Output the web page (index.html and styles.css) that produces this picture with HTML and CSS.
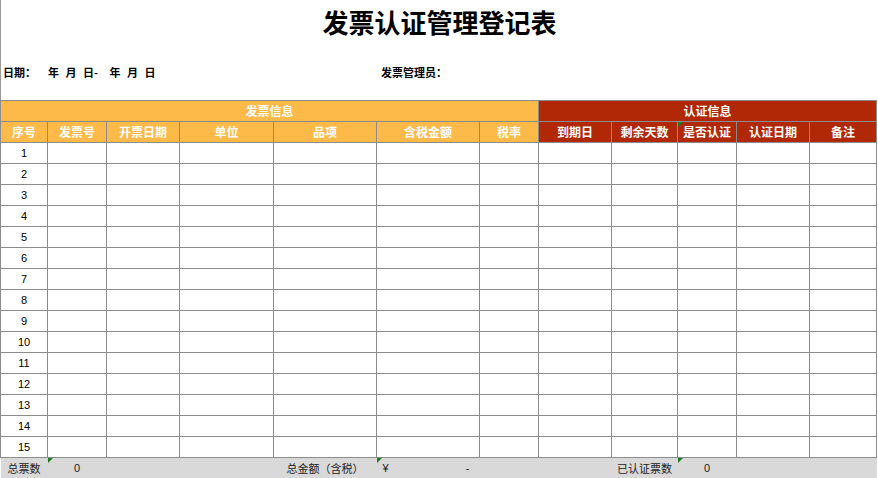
FILE: index.html
```html
<!DOCTYPE html>
<html lang="zh-CN">
<head>
<meta charset="utf-8">
<title>发票认证管理登记表</title>
<link rel="stylesheet" href="styles.css">
</head>
<body>
<div class="top">
  <h1 class="title">发票认证管理登记表</h1>
  <div class="meta">
    <div class="date">
      <span class="label">日期：</span>
      <span class="range">
        <span>年</span><span>月</span><span>日-</span><span class="second">年</span><span>月</span><span>日</span>
      </span>
    </div>
    <div class="manager">发票管理员：</div>
  </div>
</div>
<table class="sheet">
  <colgroup>
    <col class="w47"><col class="w59"><col class="w73"><col class="w94"><col class="w103"><col class="w103">
    <col class="w59"><col class="w73"><col class="w66"><col class="w59"><col class="w73"><col class="w67">
  </colgroup>
  <thead>
    <tr>
      <th colspan="7" class="or">发票信息</th>
      <th colspan="5" class="rd">认证信息</th>
    </tr>
    <tr>
      <th class="or">序号</th><th class="or">发票号</th><th class="or">开票日期</th><th class="or">单位</th><th class="or">品项</th><th class="or">含税金额</th><th class="or">税率</th>
      <th class="rd">到期日</th><th class="rd">剩余天数</th><th class="rd flag">是否认证</th><th class="rd">认证日期</th><th class="rd">备注</th>
    </tr>
  </thead>
  <tbody>
    <tr><td class="num">1</td><td></td><td></td><td></td><td></td><td></td><td></td><td></td><td></td><td></td><td></td><td></td></tr>
    <tr><td class="num">2</td><td></td><td></td><td></td><td></td><td></td><td></td><td></td><td></td><td></td><td></td><td></td></tr>
    <tr><td class="num">3</td><td></td><td></td><td></td><td></td><td></td><td></td><td></td><td></td><td></td><td></td><td></td></tr>
    <tr><td class="num">4</td><td></td><td></td><td></td><td></td><td></td><td></td><td></td><td></td><td></td><td></td><td></td></tr>
    <tr><td class="num">5</td><td></td><td></td><td></td><td></td><td></td><td></td><td></td><td></td><td></td><td></td><td></td></tr>
    <tr><td class="num">6</td><td></td><td></td><td></td><td></td><td></td><td></td><td></td><td></td><td></td><td></td><td></td></tr>
    <tr><td class="num">7</td><td></td><td></td><td></td><td></td><td></td><td></td><td></td><td></td><td></td><td></td><td></td></tr>
    <tr><td class="num">8</td><td></td><td></td><td></td><td></td><td></td><td></td><td></td><td></td><td></td><td></td><td></td></tr>
    <tr><td class="num">9</td><td></td><td></td><td></td><td></td><td></td><td></td><td></td><td></td><td></td><td></td><td></td></tr>
    <tr><td class="num">10</td><td></td><td></td><td></td><td></td><td></td><td></td><td></td><td></td><td></td><td></td><td></td></tr>
    <tr><td class="num">11</td><td></td><td></td><td></td><td></td><td></td><td></td><td></td><td></td><td></td><td></td><td></td></tr>
    <tr><td class="num">12</td><td></td><td></td><td></td><td></td><td></td><td></td><td></td><td></td><td></td><td></td><td></td></tr>
    <tr><td class="num">13</td><td></td><td></td><td></td><td></td><td></td><td></td><td></td><td></td><td></td><td></td><td></td></tr>
    <tr><td class="num">14</td><td></td><td></td><td></td><td></td><td></td><td></td><td></td><td></td><td></td><td></td><td></td></tr>
    <tr><td class="num">15</td><td></td><td></td><td></td><td></td><td></td><td></td><td></td><td></td><td></td><td></td><td></td></tr>
  </tbody>
  <tfoot>
    <tr>
      <td class="left">总票数</td>
      <td class="flag val">0</td>
      <td></td><td></td>
      <td>总金额（含税）</td>
      <td class="flag"><span class="acct"><span>¥</span><span>-</span></span></td>
      <td></td><td></td>
      <td>已认证票数</td>
      <td class="flag val">0</td>
      <td></td><td></td>
    </tr>
  </tfoot>
</table>
</body>
</html>
```

FILE: styles.css
```css
html, body {
  margin: 0;
  padding: 0;
  background: #ffffff;
}

body {
  width: 878px;
  height: 478px;
  overflow: hidden;
  font-family: "Noto Sans CJK SC", "Noto Sans", sans-serif;
  color: #000;
}

.top {
  border-left: 1px solid #9a9a9a;
  height: 100px;
  box-sizing: border-box;
}

.title {
  margin: 0;
  height: 44px;
  line-height: 44px;
  text-align: center;
  font-size: 26px;
  font-weight: 700;
}

.meta {
  display: grid;
  grid-template-columns: 380px 1fr;
  align-items: center;
  height: 56px;
  font-size: 11px;
  font-weight: 700;
  line-height: 14px;
}

.date {
  display: flex;
  align-items: center;
}

.date .label {
  margin-left: 2px;
}

.range {
  display: flex;
  gap: 6.5px;
  margin-left: 12px;
}

.range .second {
  margin-left: 5px;
}

.sheet {
  border-collapse: collapse;
  table-layout: fixed;
  width: 877px;
  font-size: 11px;
}

.w47 { width: 47px; }
.w59 { width: 59px; }
.w66 { width: 66px; }
.w67 { width: 67px; }
.w73 { width: 73px; }
.w94 { width: 94px; }
.w103 { width: 103px; }

.sheet tr {
  height: 21px;
}

.sheet th,
.sheet td {
  border: 1px solid #8c8c8c;
  padding: 0;
  text-align: center;
  vertical-align: middle;
  line-height: 14px;
  white-space: nowrap;
}

.sheet th {
  color: #ffffff;
  font-weight: 700;
  font-size: 12px;
}

.or { background: #fdba49; }
.rd { background: #b02806; }

.num {
  font-family: "Liberation Sans", Arial, sans-serif;
  font-size: 11px;
}

.sheet tfoot td {
  background: #d9d9d9;
  border-left: none;
  border-right: none;
  border-bottom: none;
  color: #222;
  font-size: 11px;
}

.sheet tfoot td.left {
  text-align: left;
  padding-left: 7px;
}

.sheet tfoot td.val {
  font-family: "Liberation Sans", Arial, sans-serif;
}

.acct {
  display: flex;
  justify-content: space-between;
  padding: 0 10px 0 6px;
  font-family: "Liberation Sans", Arial, sans-serif;
}

.flag {
  position: relative;
}

.flag::before {
  content: "";
  position: absolute;
  left: 0;
  top: 0;
  border-top: 5px solid #1e7b22;
  border-right: 5px solid transparent;
}
```
